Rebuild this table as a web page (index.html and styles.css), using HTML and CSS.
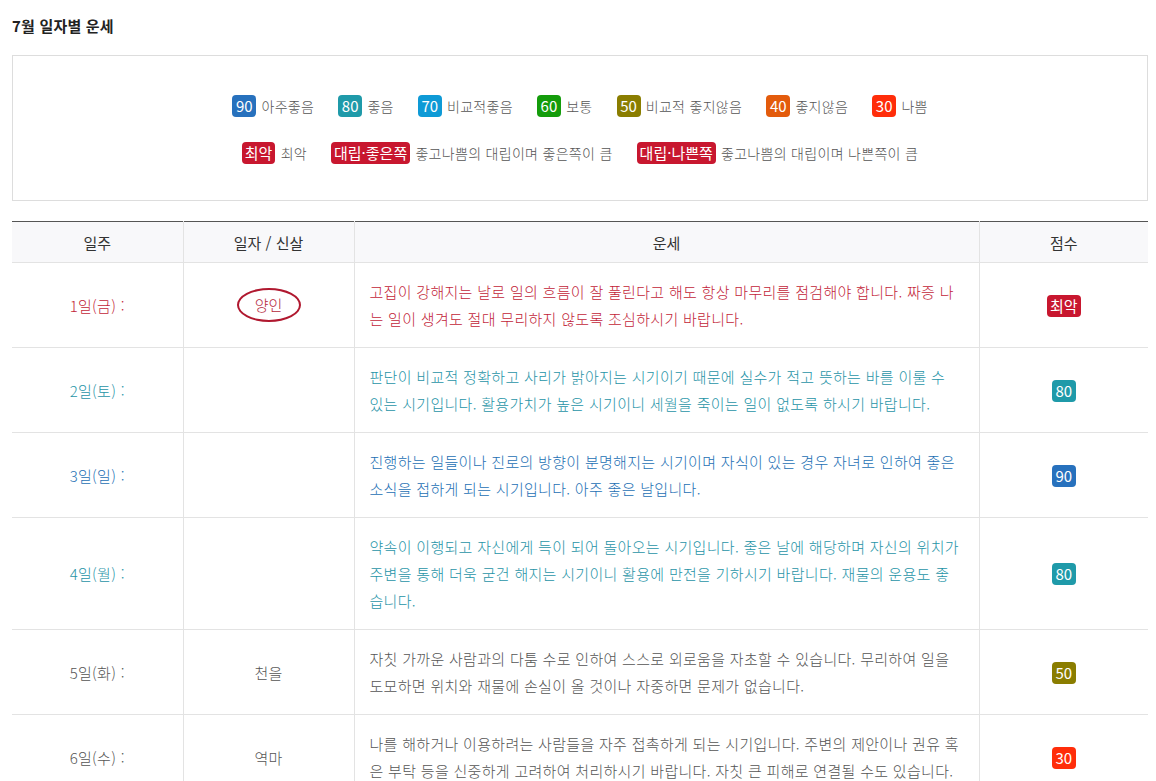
FILE: index.html
```html
<!DOCTYPE html>
<html lang="ko">
<head>
  <meta charset="UTF-8" />
  <meta name="viewport" content="width=device-width, initial-scale=1" />
  <title>7월 일자별 운세</title>
  <link rel="stylesheet" href="styles.css">
</head>
<body>
  <div class="wrap">
    <h3 class="title">7월 일자별 운세</h3>

    <div class="legend">
      <div class="legend-row">
        <span class="item"><span class="badge s90">90</span> 아주좋음</span>
        <span class="item"><span class="badge s80">80</span> 좋음</span>
        <span class="item"><span class="badge s70">70</span> 비교적좋음</span>
        <span class="item"><span class="badge s60">60</span> 보통</span>
        <span class="item"><span class="badge s50">50</span> 비교적 좋지않음</span>
        <span class="item"><span class="badge s40">40</span> 좋지않음</span>
        <span class="item"><span class="badge s30">30</span> 나쁨</span>
      </div>
      <div class="legend-row">
        <span class="item"><span class="badge worst">최악</span> 최악</span>
        <span class="item"><span class="badge worst">대립·좋은쪽</span> 좋고나쁨의 대립이며 좋은쪽이 큼</span>
        <span class="item"><span class="badge worst">대립·나쁜쪽</span> 좋고나쁨의 대립이며 나쁜쪽이 큼</span>
      </div>
    </div>

    <table class="fortune">
      <colgroup>
        <col class="c-day"><col class="c-sal"><col class="c-text"><col class="c-score">
      </colgroup>
      <thead>
        <tr><th>일주</th><th>일자 / 신살</th><th>운세</th><th>점수</th></tr>
      </thead>
      <tbody>
        <tr class="t-worst">
          <td>1일(금) :</td>
          <td><span class="ring">양인</span></td>
          <td class="desc">고집이 강해지는 날로 일의 흐름이 잘 풀린다고 해도 항상 마무리를 점검해야 합니다. 짜증 나는 일이 생겨도 절대 무리하지 않도록 조심하시기 바랍니다.</td>
          <td><span class="badge worst">최악</span></td>
        </tr>
        <tr class="t-80">
          <td>2일(토) :</td>
          <td></td>
          <td class="desc">판단이 비교적 정확하고 사리가 밝아지는 시기이기 때문에 실수가 적고 뜻하는 바를 이룰 수 있는 시기입니다. 활용가치가 높은 시기이니 세월을 죽이는 일이 없도록 하시기 바랍니다.</td>
          <td><span class="badge s80">80</span></td>
        </tr>
        <tr class="t-90">
          <td>3일(일) :</td>
          <td></td>
          <td class="desc">진행하는 일들이나 진로의 방향이 분명해지는 시기이며 자식이 있는 경우 자녀로 인하여 좋은 소식을 접하게 되는 시기입니다. 아주 좋은 날입니다.</td>
          <td><span class="badge s90">90</span></td>
        </tr>
        <tr class="t-80">
          <td>4일(월) :</td>
          <td></td>
          <td class="desc">약속이 이행되고 자신에게 득이 되어 돌아오는 시기입니다. 좋은 날에 해당하며 자신의 위치가 주변을 통해 더욱 굳건 해지는 시기이니 활용에 만전을 기하시기 바랍니다. 재물의 운용도 좋습니다.</td>
          <td><span class="badge s80">80</span></td>
        </tr>
        <tr class="t-50">
          <td>5일(화) :</td>
          <td>천을</td>
          <td class="desc">자칫 가까운 사람과의 다툼 수로 인하여 스스로 외로움을 자초할 수 있습니다. 무리하여 일을 도모하면 위치와 재물에 손실이 올 것이나 자중하면 문제가 없습니다.</td>
          <td><span class="badge s50">50</span></td>
        </tr>
        <tr class="t-30">
          <td>6일(수) :</td>
          <td>역마</td>
          <td class="desc">나를 해하거나 이용하려는 사람들을 자주 접촉하게 되는 시기입니다. 주변의 제안이나 권유 혹은 부탁 등을 신중하게 고려하여 처리하시기 바랍니다. 자칫 큰 피해로 연결될 수도 있습니다.</td>
          <td><span class="badge s30">30</span></td>
        </tr>
      </tbody>
    </table>
  </div>
</body>
</html>
```

FILE: styles.css
```css
body {
  margin: 0;
  font-family: "Noto Sans CJK KR", "Noto Sans", sans-serif;
  color: #333;
  background: #fff;
}
.wrap {
  margin: 0 8px 0 12px;
  padding-top: 14px;
}
.title {
  margin: 0 0 17px;
  font-size: 15px;
  font-weight: bold;
  color: #222;
  line-height: 24px;
  letter-spacing: 0.2px;
}
.legend {
  border: 1px solid #ddd;
  padding: 39px 10px 36px;
  display: flex;
  flex-direction: column;
  gap: 25px;
  margin-bottom: 20px;
}
.legend-row {
  display: flex;
  justify-content: center;
  gap: 24px;
}
.item {
  font-size: 14px;
  font-weight: 300;
  color: #555;
  line-height: 22px;
  letter-spacing: 0.3px;
}
.item .badge {
  margin-right: 1px;
}
.badge {
  display: inline-block;
  box-sizing: border-box;
  padding: 0 3px;
  border-radius: 4px;
  color: #fff;
  font-size: 15px;
  font-weight: 400;
  line-height: 22px;
  min-width: 24px;
  text-align: center;
  letter-spacing: 0;
}
.s90 { background: #2771bd; }
.s80 { background: #1f9aa9; }
.s70 { background: #0e9ad6; }
.s60 { background: #149c0b; }
.s50 { background: #8a7d00; }
.s40 { background: #e35b0c; }
.s30 { background: #ff2d0a; }
.worst { background: #c8172f; }

.fortune {
  width: 100%;
  border-collapse: collapse;
  table-layout: fixed;
  border-top: 1px solid #555;
}
.c-day, .c-sal { width: 171px; }
.c-score { width: 169px; }
th, td {
  border: 1px solid #e3e3e3;
  text-align: center;
  font-size: 15px;
}
th:first-child, td:first-child { border-left: none; }
th:last-child, td:last-child { border-right: none; }
th {
  background: #f8f8fa;
  font-weight: normal;
  color: #333;
  height: 40px;
  padding: 0;
  border-top: none;
}
td {
  padding: 15px 15px;
  line-height: 27px;
  font-weight: 300;
  letter-spacing: 0.3px;
}
td.desc {
  text-align: left;
  padding-right: 16px;
}
.t-worst td { color: #c21d38; }
.t-80 td { color: #1f94a7; }
.t-90 td { color: #2470b4; }
.t-50 td, .t-30 td { color: #555; }
td .badge { color: #fff; }
.ring {
  display: inline-block;
  width: 60px;
  height: 30px;
  line-height: 30px;
  border: 2px solid #b0182f;
  border-radius: 50%;
  color: #b41e3a;
  letter-spacing: 0;
}
```
